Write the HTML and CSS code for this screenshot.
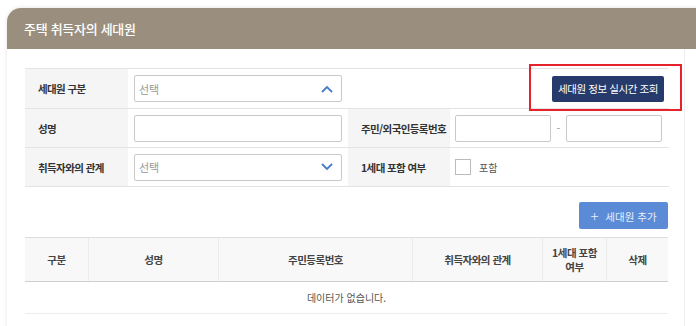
FILE: index.html
```html
<!DOCTYPE html>
<html lang="ko">
<head>
    <meta charset="UTF-8">
    <meta name="viewport" content="width=device-width, initial-scale=1.0">
    <title>주택 취득자의 세대원</title>
    <link rel="stylesheet" href="styles.css">
</head>
<body>
    <div class="card">
        <div class="card-header">주택 취득자의 세대원</div>

        <div class="card-body">
            <div class="form-grid">
                <div class="label">세대원 구분</div>
                <div class="value">
                    <div class="select">
                        <span class="placeholder">선택</span>
                        <svg class="chevron" width="12" height="8" viewBox="0 0 12 8"><path d="M1 7 L6 2 L11 7" fill="none" stroke="#4a7cc8" stroke-width="1.8"/></svg>
                    </div>
                </div>
                <div class="value wide">
                    <button class="btn-navy">세대원 정보 실시간 조회</button>
                </div>

                <div class="label">성명</div>
                <div class="value"><div class="input"></div></div>
                <div class="label">주민/외국인등록번호</div>
                <div class="value split">
                    <div class="input"></div>
                    <span class="dash">-</span>
                    <div class="input"></div>
                </div>

                <div class="label">취득자와의 관계</div>
                <div class="value">
                    <div class="select">
                        <span class="placeholder">선택</span>
                        <svg class="chevron" width="12" height="8" viewBox="0 0 12 8"><path d="M1 1 L6 6 L11 1" fill="none" stroke="#4a7cc8" stroke-width="1.8"/></svg>
                    </div>
                </div>
                <div class="label">1세대 포함 여부</div>
                <div class="value">
                    <span class="checkbox"></span>
                    <span class="check-text">포함</span>
                </div>
            </div>

            <div class="actions">
                <button class="btn-add"><span class="plus">+</span> 세대원 추가</button>
            </div>

            <table class="list">
                <thead>
                    <tr>
                        <th style="width: 63px">구분</th>
                        <th style="width: 129px">성명</th>
                        <th style="width: 193px">주민등록번호</th>
                        <th style="width: 129px">취득자와의 관계</th>
                        <th style="width: 63px">1세대 포함<br>여부</th>
                        <th>삭제</th>
                    </tr>
                </thead>
                <tbody>
                    <tr>
                        <td colspan="6" class="empty">데이터가 없습니다.</td>
                    </tr>
                </tbody>
            </table>
        </div>
    </div>
</body>
</html>
```

FILE: styles.css
```css
body {
    margin: 0;
    padding: 0;
    background: #fff;
    font-family: "Noto Sans CJK KR", "Noto Sans", sans-serif;
    color: #333;
    overflow: hidden;
}

.card {
    margin: 8px 0 0 7px;
    width: 700px;
    height: 330px;
    background: #fff;
    border-radius: 14px 0 0 0;
    box-shadow: 0 0 4px rgba(0, 0, 0, 0.12);
}

.card-header {
    height: 41px;
    background: #9a8f7e;
    border-radius: 14px 0 0 0;
    color: #fff;
    font-size: 13px;
    font-weight: 500;
    line-height: 41px;
    padding-left: 17px;
    letter-spacing: -0.3px;
}

.card-body {
    width: 643px;
    padding: 19px 16px 0 18px;
    border-right: 1px solid #eee;
    height: 270px;
}

.form-grid {
    display: grid;
    grid-template-columns: 103px 220px 102px 1fr;
    grid-template-rows: 40px 39px 39px;
    border-top: 1px solid #e3e3e3;
}

.label,
.value {
    display: flex;
    align-items: center;
    border-bottom: 1px solid #e3e3e3;
    font-size: 11px;
}

.label {
    background: #f5f5f5;
    font-weight: bold;
    font-size: 10.5px;
    color: #333;
    padding-left: 13px;
    letter-spacing: -0.6px;
    white-space: nowrap;
}

.value {
    padding: 0 6px;
}

.value.wide {
    grid-column: span 2;
    justify-content: flex-end;
    padding-right: 5px;
}

.select,
.input {
    box-sizing: border-box;
    height: 27px;
    border: 1px solid #c9c9c9;
    border-radius: 2px;
    background: #fff;
}

.select {
    width: 100%;
    display: flex;
    align-items: center;
    justify-content: space-between;
    padding: 0 8px 0 4px;
}

.input {
    width: 100%;
}

.placeholder {
    color: #999;
    font-size: 11px;
}

.split {
    padding-left: 5px;
    padding-right: 7px;
}

.split .input {
    width: 96px;
}

.dash {
    width: 15px;
    text-align: center;
    color: #999;
}

.split .input:last-child {
    flex: 1;
}

.btn-navy {
    position: relative;
    height: 26px;
    width: 112px;
    border: none;
    border-radius: 2px;
    background: #263b6b;
    color: #fff;
    font-family: inherit;
    font-size: 10.5px;
    letter-spacing: -0.4px;
    padding: 0;
}

/* annotation box */
.btn-navy::after {
    content: "";
    position: absolute;
    top: -12px;
    left: -23px;
    right: -18px;
    bottom: -9px;
    border: 2px solid #e8222a;
}

.checkbox {
    display: inline-block;
    width: 14px;
    height: 14px;
    border: 1px solid #bbb;
    background: #fff;
    margin-left: -1px;
}

.check-text {
    margin-left: 8px;
    font-size: 10px;
    color: #555;
}

.actions {
    display: flex;
    justify-content: flex-end;
    padding: 15px 0 8px;
}

.btn-add {
    height: 27px;
    width: 89px;
    border: none;
    border-radius: 2px;
    background: #5b8bd6;
    color: #e8eefa;
    font-family: inherit;
    font-size: 10.5px;
    padding: 0;
}

.plus {
    font-size: 15px;
    font-weight: 300;
    margin-right: 4px;
    vertical-align: -1px;
}

.list {
    width: 643px;
    border-collapse: collapse;
    font-size: 10.5px;
}

.list th {
    height: 43px;
    background: #f8f8f8;
    border-top: 1px solid #dedede;
    border-bottom: 1px solid #cfcfcf;
    border-left: 1px solid #ececec;
    font-weight: bold;
    color: #444;
    line-height: 14px;
    padding: 0;
    letter-spacing: -0.5px;
}

.list th:first-child {
    border-left: none;
}

.list td {
    height: 31px;
    border-bottom: 1px solid #ececec;
    padding: 0;
}

.empty {
    text-align: center;
    font-size: 10px;
    color: #555;
}
```
